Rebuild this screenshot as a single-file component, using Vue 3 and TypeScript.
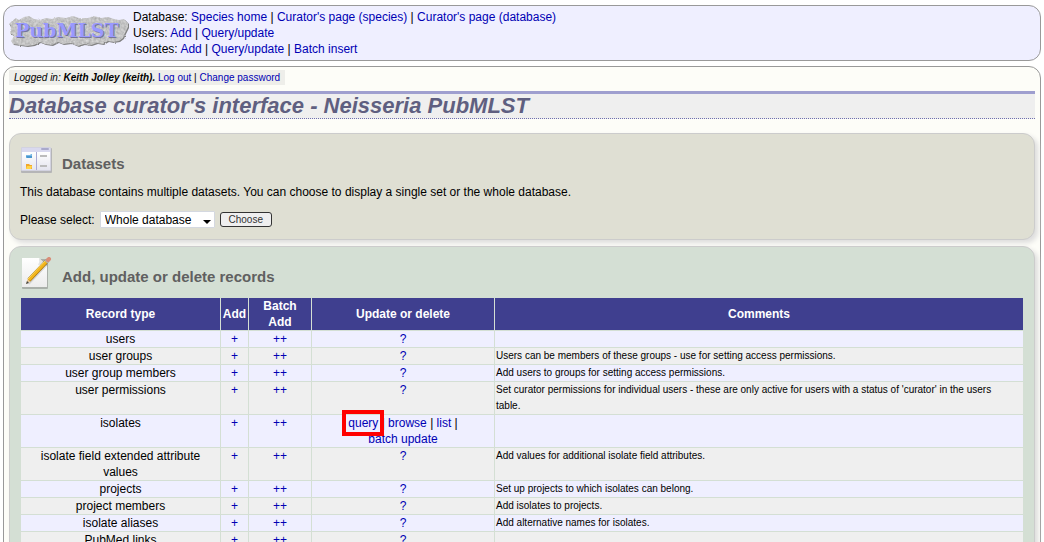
<script setup lang="ts">
import { ref } from 'vue'

interface NavLink {
  label: string
  href: string
}

interface NavRow {
  title: string
  links: NavLink[]
}

interface RecordRow {
  name: string
  comment: string
  actions?: boolean
}

const nav: NavRow[] = [
  {
    title: 'Database',
    links: [
      { label: 'Species home', href: '#home' },
      { label: "Curator's page (species)", href: '#species' },
      { label: "Curator's page (database)", href: '#database' },
    ],
  },
  {
    title: 'Users',
    links: [
      { label: 'Add', href: '#add-user' },
      { label: 'Query/update', href: '#query-user' },
    ],
  },
  {
    title: 'Isolates',
    links: [
      { label: 'Add', href: '#add-isolate' },
      { label: 'Query/update', href: '#query-isolate' },
      { label: 'Batch insert', href: '#batch-isolate' },
    ],
  },
]

const records: RecordRow[] = [
  { name: 'users', comment: '' },
  { name: 'user groups', comment: 'Users can be members of these groups - use for setting access permissions.' },
  { name: 'user group members', comment: 'Add users to groups for setting access permissions.' },
  {
    name: 'user permissions',
    comment:
      "Set curator permissions for individual users - these are only active for users with a status of 'curator' in the users table.",
  },
  { name: 'isolates', comment: '', actions: true },
  { name: 'isolate field extended attribute values', comment: 'Add values for additional isolate field attributes.' },
  { name: 'projects', comment: 'Set up projects to which isolates can belong.' },
  { name: 'project members', comment: 'Add isolates to projects.' },
  { name: 'isolate aliases', comment: 'Add alternative names for isolates.' },
  { name: 'PubMed links', comment: '' },
]

const dataset = ref('Whole database')
</script>

<template>
  <div class="page">
    <header class="banner">
      <svg class="logo" viewBox="0 0 120 32" role="img" aria-label="PubMLST">
        <defs>
          <filter id="stone" x="-5%" y="-10%" width="110%" height="120%" color-interpolation-filters="sRGB">
            <feTurbulence type="fractalNoise" baseFrequency="0.4" numOctaves="2" seed="4" result="noise" />
            <feDisplacementMap
              in="SourceGraphic"
              in2="noise"
              scale="2"
              xChannelSelector="R"
              yChannelSelector="G"
              result="shape"
            />
            <feColorMatrix
              in="noise"
              type="matrix"
              values="0.25 0 0 0 0.64  0.25 0 0 0 0.64  0.25 0 0 0 0.64  0 0 0 0 1"
              result="grain"
            />
            <feComposite in="grain" in2="shape" operator="in" result="slab" />
            <feOffset in="shape" dx="1" dy="1" result="edge" />
            <feColorMatrix
              in="edge"
              type="matrix"
              values="0 0 0 0 0.5  0 0 0 0 0.5  0 0 0 0 0.5  0 0 0 1 0"
              result="shade"
            />
            <feMerge>
              <feMergeNode in="shade" />
              <feMergeNode in="slab" />
            </feMerge>
          </filter>
        </defs>
        <path
          filter="url(#stone)"
          fill="#c4c4c4"
          d="M3 6 L7 3 L10 5 L15 2 L20 1 L25 4 L31 5 L37 3 L43 4 L49 2 L57 3 L64 1 L70 3 L79 3 L85 1 L92 3 L99 2 L105 4 L110 5 L115 4 L119 8 L119 12 L116 18 L114 23 L110 26 L104 27 L99 26 L94 29 L88 28 L82 30 L75 29 L69 31 L62 28 L54 29 L49 27 L43 30 L36 29 L31 27 L25 30 L18 31 L11 30 L4 29 L2 26 L5 21 L1 18 L2 13 L0 9 Z"
        />
        <g class="logo-text">
          <text x="7" y="23" fill="#74749a">PubMLST</text>
          <text x="6" y="22" fill="#9999ff">PubMLST</text>
        </g>
      </svg>
      <nav>
        <div v-for="row in nav" :key="row.title">
          {{ row.title }}:
          <template v-for="(link, i) in row.links" :key="link.href">
            <template v-if="i > 0"> | </template>
            <a :href="link.href">{{ link.label }}</a>
          </template>
        </div>
      </nav>
    </header>

    <main class="main">
      <div class="login">
        <i>Logged in: <b>Keith Jolley (keith).</b></i>
        {{ ' ' }}<a href="#logout">Log out</a> | <a href="#password">Change password</a>
      </div>

      <h1>Database curator's interface - Neisseria PubMLST</h1>

      <section class="box datasets">
        <div class="heading">
          <svg viewBox="0 0 32 32" aria-hidden="true">
            <defs>
              <linearGradient id="pane" x1="0" y1="0" x2="0" y2="1">
                <stop offset="0" stop-color="#ffffff" />
                <stop offset="1" stop-color="#e4e4ee" />
              </linearGradient>
            </defs>
            <rect x="1" y="4" width="31" height="25" rx="1" fill="#b5b5b7" />
            <rect x="1" y="3" width="30" height="24" rx="1" fill="#d2d2e0" />
            <rect x="2" y="4" width="28" height="4" fill="#d9d9ef" />
            <rect x="21" y="4" width="8" height="2" rx="1" fill="#a9a9cc" />
            <rect x="2" y="8" width="28" height="18" fill="url(#pane)" />
            <rect x="16" y="8" width="1" height="18" fill="#a9a9d4" />
            <path d="M6 11h4l1-1h1v4H6z" fill="#7ab8e4" />
            <path d="M6 12h6v2H7z" fill="#4b97ce" />
            <path d="M6 20h3l1 1h2v4H6z" fill="#f2a72c" />
            <path d="M7 22h5l-1 3H6z" fill="#ffd54a" />
            <path d="M20 12h7M20 22h7" stroke="#bcbcbc" stroke-width="2" />
          </svg>
          <h2>Datasets</h2>
        </div>
        <p>
          This database contains multiple datasets. You can choose to display a single set or the whole database.
        </p>
        <form class="chooser" @submit.prevent>
          <label for="dataset">Please select:</label>
          <span class="select">
            <select id="dataset" v-model="dataset">
              <option>Whole database</option>
            </select>
            <svg viewBox="0 0 8 4" aria-hidden="true"><path d="M0 0h8L4 4z" /></svg>
          </span>
          <button type="submit">Choose</button>
        </form>
      </section>

      <section class="box records">
        <div class="heading">
          <svg viewBox="0 0 32 32" aria-hidden="true">
            <defs>
              <linearGradient id="paper" x1="0" y1="0" x2="0" y2="1">
                <stop offset="0" stop-color="#ffffff" />
                <stop offset="1" stop-color="#ececec" />
              </linearGradient>
            </defs>
            <rect x="2" y="2" width="26" height="30" rx="1" fill="#aab0aa" />
            <path d="M2 1h17l8 8v21H2z" fill="url(#paper)" />
            <path d="M19 1q1 4-1 7q4-1 9 1z" fill="#e2e4e2" />
            <path d="M8 26L27 6" stroke="#8e8e8e" stroke-opacity=".3" stroke-width="4" />
            <path d="M6 27l2-6 3 3z" fill="#e8c690" />
            <path d="M6 27l1-3 2 2z" fill="#444" />
            <path d="M9 23L27 4" stroke="#9c6a08" stroke-width="4" />
            <path d="M9 23L27 4" stroke="#f2b41c" stroke-width="3" />
            <path d="M8 22L26 3" stroke="#ffdc60" stroke-width="1" />
            <path d="M26 5l2-2" stroke="#b0b0b0" stroke-width="4" />
            <path d="M28 3l1-1" stroke="#d98d78" stroke-width="4" stroke-linecap="round" />
          </svg>
          <h2>Add, update or delete records</h2>
        </div>
        <table>
          <colgroup>
            <col class="col-type" />
            <col class="col-add" />
            <col class="col-batch" />
            <col class="col-update" />
            <col />
          </colgroup>
          <thead>
            <tr>
              <th scope="col">Record type</th>
              <th scope="col">Add</th>
              <th scope="col" class="batch">Batch Add</th>
              <th scope="col">Update or delete</th>
              <th scope="col">Comments</th>
            </tr>
          </thead>
          <tbody>
            <tr v-for="record in records" :key="record.name">
              <td class="name">{{ record.name }}</td>
              <td><a href="#add">+</a></td>
              <td><a href="#batch-add">++</a></td>
              <td v-if="record.actions">
                <a href="#query" class="marked">query</a> | <a href="#browse">browse</a> | <a href="#list">list</a> |
                <br /><a href="#batch-update">batch update</a>
              </td>
              <td v-else><a href="#update">?</a></td>
              <td class="comment">{{ record.comment }}</td>
            </tr>
          </tbody>
        </table>
      </section>
    </main>
  </div>
</template>

<style>
body {
  background: #fff;
}
</style>

<style scoped>
.page {
  padding: 5px 3px;
  font: 12px/16px "Liberation Sans", Arial, sans-serif;
  color: #000;
}

a {
  color: #0000b4;
  text-decoration: none;
}

.banner {
  display: flex;
  gap: 4px;
  padding: 3px 5px;
  border: 1px solid #999;
  border-radius: 12px;
  background: #efefff;
}

.logo {
  width: 120px;
  height: 32px;
  margin-top: 6px;
}

.logo-text {
  font: bold 19px "DejaVu Serif", serif;
}

.main {
  margin-top: 5px;
  padding: 3px 5px 10px;
  border: 1px solid #999;
  border-radius: 12px;
  background: #fdfdf8;
}

.login {
  width: fit-content;
  padding: 0 5px;
  background: #eeeeea;
  font-size: 10px;
  line-height: 15px;
}

h1 {
  margin: 6px 0 14px;
  border-top: 3px solid #9f9fcf;
  border-bottom: 1px dotted #6f6faf;
  background: #efefef;
  color: #5f5f80;
  font-size: 22px;
  font-style: italic;
  line-height: 24px;
}

.box {
  margin-bottom: 6px;
  padding: 10px;
  border: 1px solid #ccc;
  border-radius: 12px;
  box-shadow: 3px 3px 5px #ddd;
}

.datasets {
  padding-bottom: 11px;
  background: #dfdfd3;
}

.records {
  background: #d4dfd4;
}

.heading {
  display: flex;
  align-items: flex-end;
  gap: 10px;
}

.heading svg {
  width: 32px;
  height: 32px;
}

h2 {
  margin: 0 0 3px;
  color: #606060;
  font-size: 15px;
  line-height: 18px;
}

p {
  margin: 8px 0 11px;
}

.chooser {
  display: flex;
  align-items: center;
  gap: 5px;
}

.select {
  display: flex;
  position: relative;
}

select {
  width: 115px;
  height: 17px;
  padding: 0 4px;
  appearance: none;
  border: 1px solid #d4d8e0;
  border-radius: 1px;
  background: #fff;
  color: #000;
  font: 12px "Liberation Sans", Arial, sans-serif;
}

.select svg {
  position: absolute;
  right: 4px;
  bottom: 4px;
  width: 8px;
  height: 4px;
  pointer-events: none;
}

button {
  width: 52px;
  height: 15px;
  padding: 0;
  border: 1px solid #333;
  border-radius: 3px;
  background: #efefef;
  color: #333;
  font: 10px/12px "Liberation Sans", Arial, sans-serif;
}

table {
  width: 100%;
  margin-top: 8px;
  table-layout: fixed;
  border-spacing: 1px;
}

.col-type {
  width: 199px;
}

.col-add {
  width: 27px;
}

.col-batch {
  width: 62px;
}

.col-update {
  width: 182px;
}

th,
td {
  padding: 0 1px;
  text-align: center;
  vertical-align: top;
}

th {
  background: #3f3f8f;
  color: #fff;
  vertical-align: middle;
}

.batch {
  padding: 0 8px;
}

tbody tr {
  background: #efefff;
}

tbody tr:nth-child(even) {
  background: #efefef;
}

.name {
  padding: 0 12px;
}

.comment {
  padding-right: 12px;
  font-size: 10px;
  text-align: left;
}

.marked {
  position: relative;
}

.marked::after {
  position: absolute;
  inset: -6px;
  border: 4px solid #f00;
  content: "";
}
</style>
